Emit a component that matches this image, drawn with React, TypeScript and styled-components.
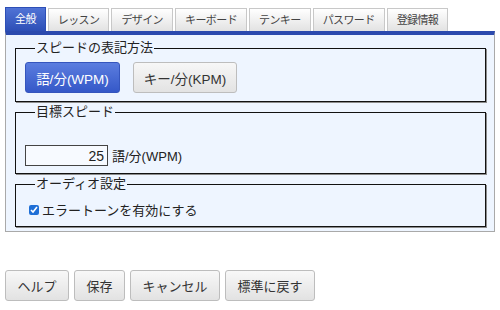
import React from "react";
import styled, { createGlobalStyle, css } from "styled-components";

const Global = createGlobalStyle`
  html, body { margin: 0; padding: 0; background: #ffffff; }
  body { font-family: "Liberation Sans", "Noto Sans CJK JP", sans-serif; color: #222; }
`;

const Page = styled.div`
  width: 500px;
  padding: 7px 6px 0 5px;
  box-sizing: border-box;
`;

const TabBar = styled.div`
  display: flex;
  align-items: flex-end;
  gap: 2px;
  height: 24px;
`;

const Tab = styled.div<{ $active?: boolean }>`
  box-sizing: border-box;
  height: ${(p) => (p.$active ? 24 : 23)}px;
  padding: 0 9px;
  display: flex;
  align-items: center;
  font-size: 11px;
  letter-spacing: -0.6px;
  line-height: 1;
  border: 1px solid #c8c8c8;
  border-bottom: none;
  ${(p) =>
    p.$active
      ? css`
          background: linear-gradient(#5073d6, #2d4fb6);
          border-color: #2d4fb6;
          color: #fff;
        `
      : css`
          background: linear-gradient(#ffffff, #e2e2e2);
          color: #444;
        `}
`;

const Panel = styled.div`
  box-sizing: border-box;
  width: 490px;
  height: 201px;
  background: #eef5ff;
  border: 1px solid #a9a9a9;
  border-top: 4px solid #2b4aae;
  padding: 5px 8px 4px 9px;
  display: flex;
  flex-direction: column;
  gap: 2px;
`;

const Group = styled.fieldset<{ $h: number; $pt: number }>`
  box-sizing: border-box;
  margin: 0;
  min-width: 0;
  height: ${(p) => p.$h}px;
  border: 1px solid #111;
  box-shadow: 1px 1px 0 #8c8c8c;
  padding: ${(p) => p.$pt}px 9px 0 9px;
  display: flex;
  align-items: flex-start;
`;

const Legend = styled.legend`
  font-size: 13px;
  line-height: 16px;
  height: 16px;
  padding: 0 1px;
  margin-left: 10px;
  color: #222;
`;

const Choice = styled.button<{ $primary?: boolean; $w: number }>`
  box-sizing: border-box;
  width: ${(p) => p.$w}px;
  height: 31px;
  padding: 0;
  margin-right: 13px;
  border-radius: 3px;
  font-family: inherit;
  font-size: 13.5px;
  cursor: pointer;
  ${(p) =>
    p.$primary
      ? css`
          background: linear-gradient(#5b7ddf, #3558c8);
          border: 1px solid #3555bd;
          color: #fff;
        `
      : css`
          background: linear-gradient(#f7f7f7, #e3e3e3);
          border: 1px solid #bdbdbd;
          color: #333;
        `}
`;

const Row = styled.div`
  display: flex;
  align-items: center;
  font-size: 13px;
  color: #222;
`;

const NumberBox = styled.input`
  box-sizing: border-box;
  width: 83px;
  height: 21px;
  border: 1px solid #444;
  background: #f7faff;
  text-align: right;
  padding: 0 3px;
  font-family: inherit;
  font-size: 14px;
  color: #222;
  margin: 0 4px 0 0;
`;

const Check = styled.input`
  width: 10px;
  height: 10px;
  margin: 0 3px 0 4px;
  accent-color: #1f6fd6;
`;

const Footer = styled.div`
  display: flex;
  gap: 5px;
  margin-top: 38px;
`;

const FootButton = styled.button`
  box-sizing: border-box;
  height: 31px;
  padding: 0 11.5px;
  border-radius: 3px;
  border: 1px solid #bdbdbd;
  background: linear-gradient(#f8f8f8, #e2e2e2);
  font-family: inherit;
  font-size: 13px;
  color: #333;
  cursor: pointer;
`;

const tabs = ["全般", "レッスン", "デザイン", "キーボード", "テンキー", "パスワード", "登録情報"];

export default function App() {
  return (
    <Page>
      <Global />
      <TabBar>
        {tabs.map((t, i) => (
          <Tab key={t} $active={i === 0}>
            {t}
          </Tab>
        ))}
      </TabBar>
      <Panel>
        <Group $h={62} $pt={6}>
          <Legend>スピードの表記方法</Legend>
          <Choice $primary $w={95}>語/分(WPM)</Choice>
          <Choice $w={104}>キー/分(KPM)</Choice>
        </Group>
        <Group $h={70} $pt={25}>
          <Legend>目標スピード</Legend>
          <Row>
            <NumberBox defaultValue="25" />
            語/分(WPM)
          </Row>
        </Group>
        <Group $h={51} $pt={8}>
          <Legend>オーディオ設定</Legend>
          <Row>
            <Check type="checkbox" defaultChecked />
            エラートーンを有効にする
          </Row>
        </Group>
      </Panel>
      <Footer>
        <FootButton>ヘルプ</FootButton>
        <FootButton>保存</FootButton>
        <FootButton>キャンセル</FootButton>
        <FootButton>標準に戻す</FootButton>
      </Footer>
    </Page>
  );
}
